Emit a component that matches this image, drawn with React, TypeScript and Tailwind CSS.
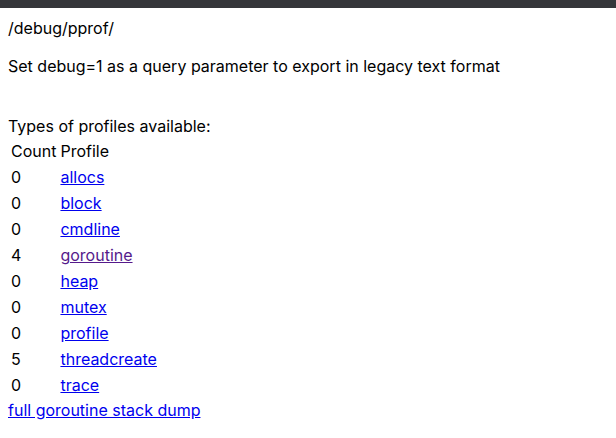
const profiles = [
  { count: 0, name: "allocs" },
  { count: 0, name: "block" },
  { count: 0, name: "cmdline" },
  { count: 4, name: "goroutine", visited: true },
  { count: 0, name: "heap" },
  { count: 0, name: "mutex" },
  { count: 0, name: "profile" },
  { count: 5, name: "threadcreate" },
  { count: 0, name: "trace" },
];

export default function App() {
  return (
    <div className="min-h-screen bg-white text-black font-['Inter','Liberation_Sans',Arial,sans-serif] text-[16px] leading-[22px]">
      <div className="h-[8px] bg-[#35363a]" />
      <div className="p-2 pt-[9px]">
        <div>/debug/pprof/</div>
        <p className="my-4">Set debug=1 as a query parameter to export in legacy text format</p>
        <div className="h-[22px]" />
        <div>Types of profiles available:</div>
        <div className="grid grid-cols-[auto_auto] justify-start gap-[2px] p-[2px]">
          <div className="p-[1px]">Count</div>
          <div className="p-[1px]">Profile</div>
          {profiles.map((p) => (
            <div key={p.name} className="contents">
              <div className="p-[1px]">{p.count}</div>
              <div className="p-[1px]">
                <a
                  href="#"
                  className={`underline ${p.visited ? "text-[#551a8b]" : "text-[#0000ee]"}`}
                >
                  {p.name}
                </a>
              </div>
            </div>
          ))}
        </div>
        <a href="#" className="underline text-[#0000ee]">
          full goroutine stack dump
        </a>
      </div>
    </div>
  );
}
